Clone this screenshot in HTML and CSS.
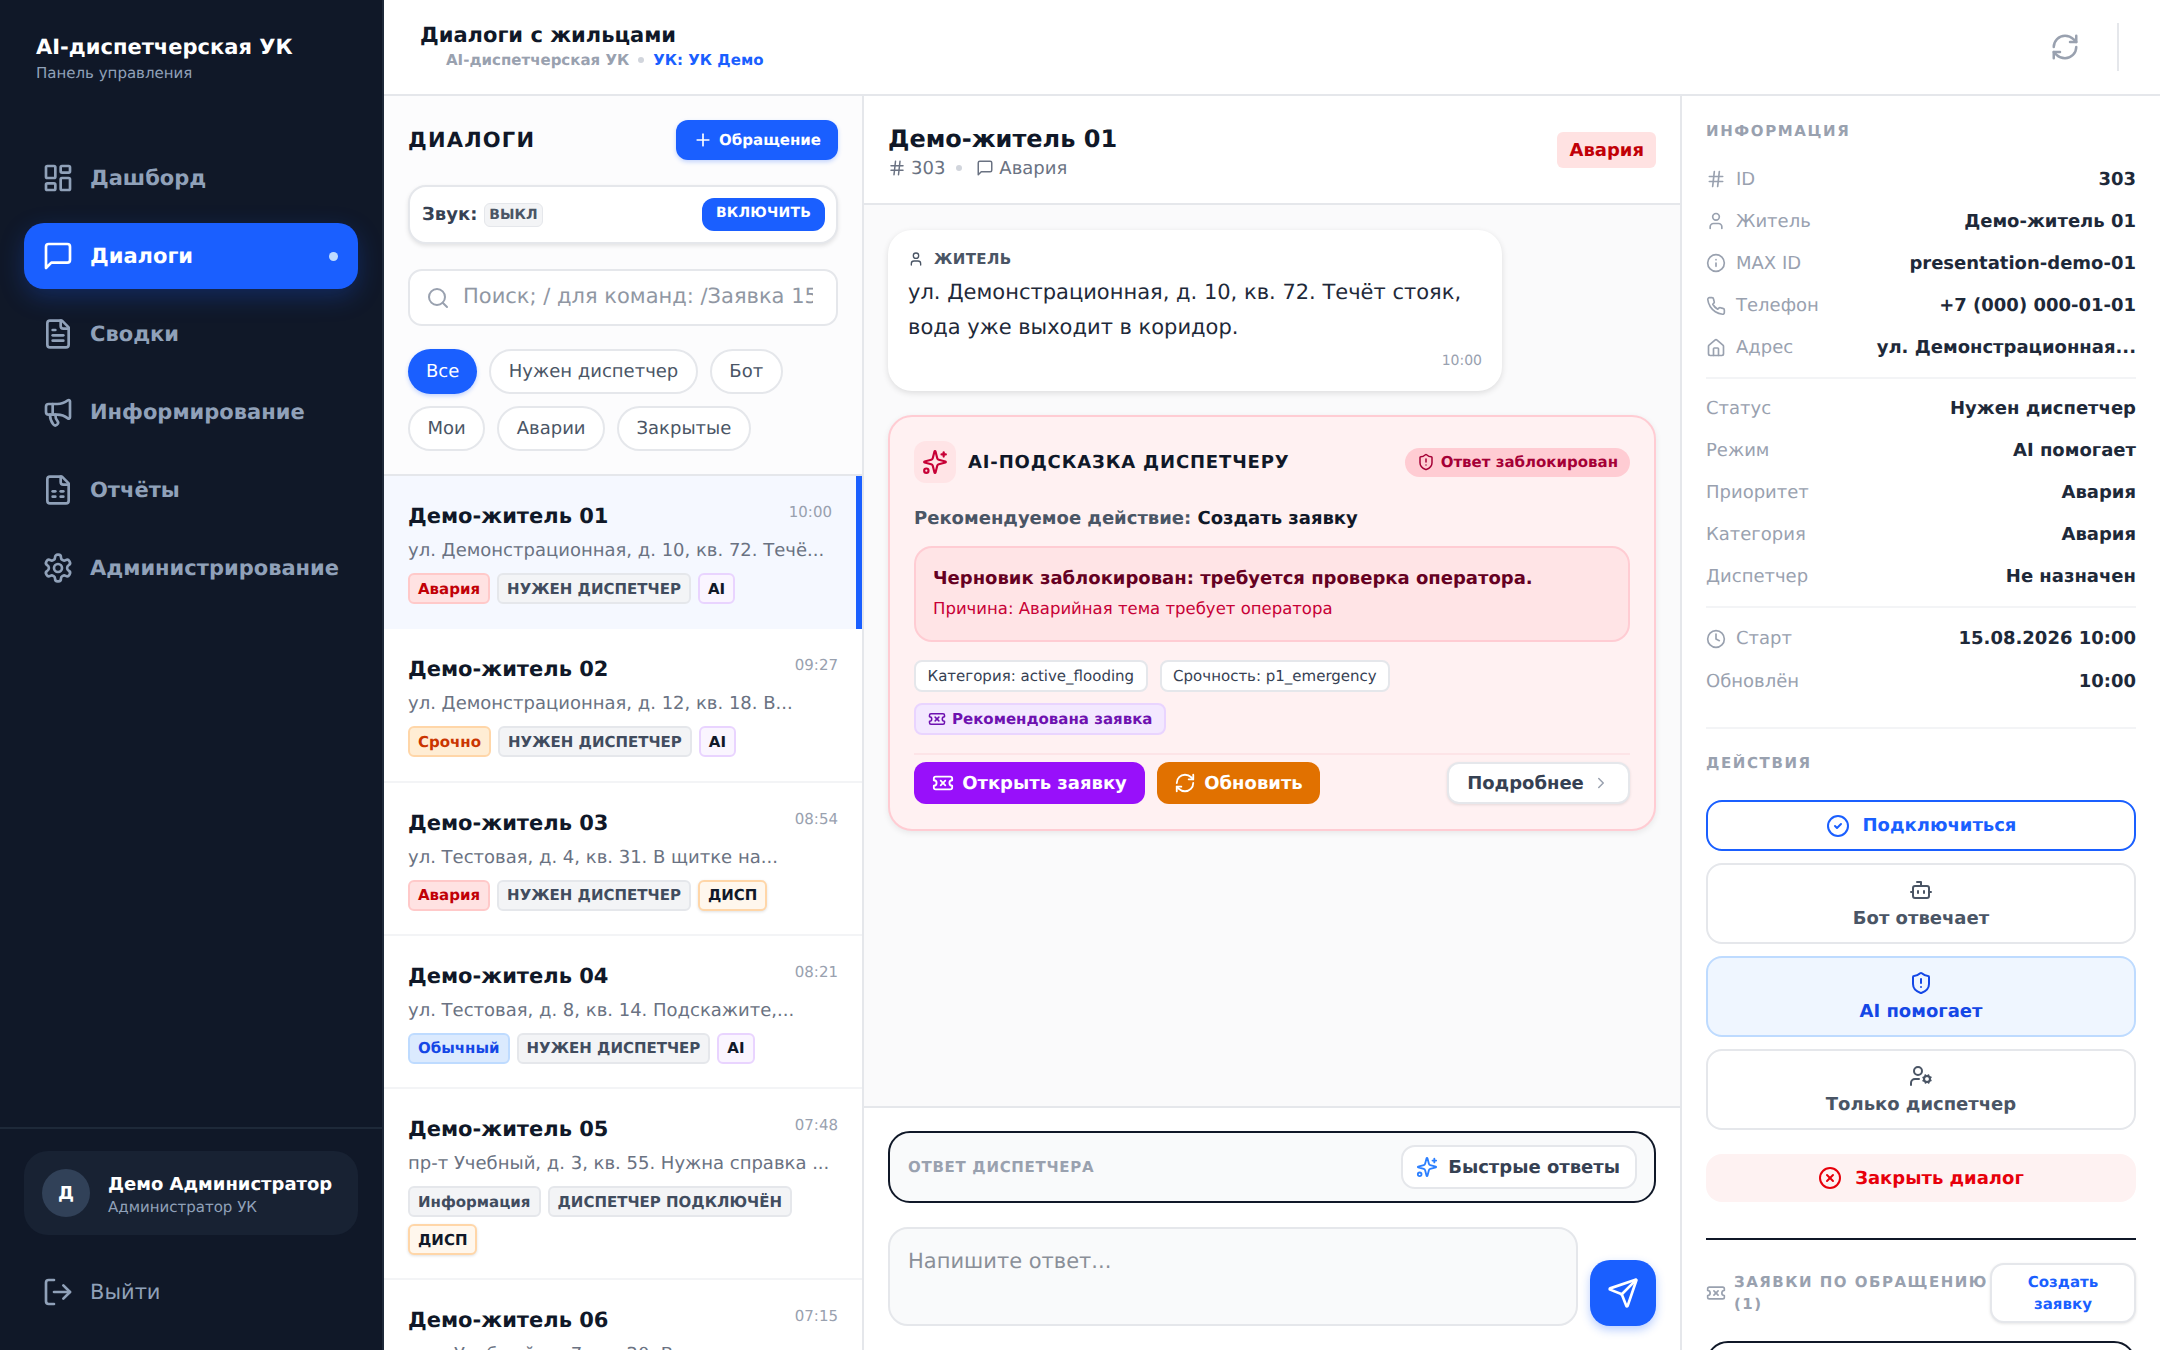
FILE: index.html
```html
<!DOCTYPE html>
<html lang="ru">
<head>
    <meta charset="UTF-8">
    <title>AI-диспетчерская УК</title>
    <link rel="stylesheet" href="styles.css">
</head>
<body>
    <!-- Набор иконок -->
    <svg class="sprite" width="0" height="0">
        <symbol id="i-dashboard" viewBox="0 0 24 24"><rect x="3" y="3" width="7" height="9" rx="1"/><rect x="14" y="3" width="7" height="5" rx="1"/><rect x="14" y="12" width="7" height="9" rx="1"/><rect x="3" y="16" width="7" height="5" rx="1"/></symbol>
        <symbol id="i-message" viewBox="0 0 24 24"><path d="M21 15a2 2 0 0 1-2 2H7l-4 4V5a2 2 0 0 1 2-2h14a2 2 0 0 1 2 2z"/></symbol>
        <symbol id="i-file" viewBox="0 0 24 24"><path d="M15 2H6a2 2 0 0 0-2 2v16a2 2 0 0 0 2 2h12a2 2 0 0 0 2-2V7z"/><path d="M14 2v4a2 2 0 0 0 2 2h4"/><path d="M10 9H8"/><path d="M16 13H8"/><path d="M16 17H8"/></symbol>
        <symbol id="i-sheet" viewBox="0 0 24 24"><path d="M15 2H6a2 2 0 0 0-2 2v16a2 2 0 0 0 2 2h12a2 2 0 0 0 2-2V7z"/><path d="M14 2v4a2 2 0 0 0 2 2h4"/><path d="M8 13h2"/><path d="M14 13h2"/><path d="M8 17h2"/><path d="M14 17h2"/></symbol>
        <symbol id="i-megaphone" viewBox="0 0 24 24"><path d="M11 6a13 13 0 0 0 8.4-2.8A1 1 0 0 1 21 4v12a1 1 0 0 1-1.6.8A13 13 0 0 0 11 14H5a2 2 0 0 1-2-2V8a2 2 0 0 1 2-2z"/><path d="M6 14a12 12 0 0 0 2.4 7.2 2 2 0 0 0 3.2-2.4A8 8 0 0 1 10 14"/><path d="M8 6v8"/></symbol>
        <symbol id="i-settings" viewBox="0 0 24 24"><path d="M12.22 2h-.44a2 2 0 0 0-2 2v.18a2 2 0 0 1-1 1.73l-.43.25a2 2 0 0 1-2 0l-.15-.08a2 2 0 0 0-2.73.73l-.22.38a2 2 0 0 0 .73 2.73l.15.1a2 2 0 0 1 1 1.72v.51a2 2 0 0 1-1 1.74l-.15.09a2 2 0 0 0-.73 2.73l.22.38a2 2 0 0 0 2.73.73l.15-.08a2 2 0 0 1 2 0l.43.25a2 2 0 0 1 1 1.73V20a2 2 0 0 0 2 2h.44a2 2 0 0 0 2-2v-.18a2 2 0 0 1 1-1.73l.43-.25a2 2 0 0 1 2 0l.15.08a2 2 0 0 0 2.73-.73l.22-.39a2 2 0 0 0-.73-2.73l-.15-.08a2 2 0 0 1-1-1.74v-.5a2 2 0 0 1 1-1.74l.15-.09a2 2 0 0 0 .73-2.73l-.22-.38a2 2 0 0 0-2.73-.73l-.15.08a2 2 0 0 1-2 0l-.43-.25a2 2 0 0 1-1-1.73V4a2 2 0 0 0-2-2z"/><circle cx="12" cy="12" r="3"/></symbol>
        <symbol id="i-logout" viewBox="0 0 24 24"><path d="M9 21H5a2 2 0 0 1-2-2V5a2 2 0 0 1 2-2h4"/><path d="m16 17 5-5-5-5"/><path d="M21 12H9"/></symbol>
        <symbol id="i-refresh" viewBox="0 0 24 24"><path d="M3 12a9 9 0 0 1 9-9 9.75 9.75 0 0 1 6.74 2.74L21 8"/><path d="M21 3v5h-5"/><path d="M21 12a9 9 0 0 1-9 9 9.75 9.75 0 0 1-6.74-2.74L3 16"/><path d="M8 16H3v5"/></symbol>
        <symbol id="i-plus" viewBox="0 0 24 24"><path d="M5 12h14"/><path d="M12 5v14"/></symbol>
        <symbol id="i-search" viewBox="0 0 24 24"><circle cx="11" cy="11" r="8"/><path d="m21 21-4.3-4.3"/></symbol>
        <symbol id="i-user" viewBox="0 0 24 24"><path d="M19 21v-2a4 4 0 0 0-4-4H9a4 4 0 0 0-4 4v2"/><circle cx="12" cy="7" r="4"/></symbol>
        <symbol id="i-hash" viewBox="0 0 24 24"><path d="M4 9h16"/><path d="M4 15h16"/><path d="M10 3 8 21"/><path d="M16 3l-2 18"/></symbol>
        <symbol id="i-sparkles" viewBox="0 0 24 24"><path d="M9.937 15.5A2 2 0 0 0 8.5 14.063l-6.135-1.582a.5.5 0 0 1 0-.962L8.5 9.936A2 2 0 0 0 9.937 8.5l1.582-6.135a.5.5 0 0 1 .963 0L14.063 8.5A2 2 0 0 0 15.5 9.937l6.135 1.581a.5.5 0 0 1 0 .964L15.5 14.063a2 2 0 0 0-1.437 1.437l-1.582 6.135a.5.5 0 0 1-.963 0z"/><path d="M20 3v4"/><path d="M22 5h-4"/><circle cx="4" cy="20" r="2"/></symbol>
        <symbol id="i-shield" viewBox="0 0 24 24"><path d="M20 13c0 5-3.5 7.5-7.66 8.95a1 1 0 0 1-.67-.01C7.5 20.5 4 18 4 13V6a1 1 0 0 1 1-1c2 0 4.5-1.2 6.24-2.72a1.17 1.17 0 0 1 1.52 0C14.51 3.81 17 5 19 5a1 1 0 0 1 1 1z"/><path d="M12 8v4"/><path d="M12 16h.01"/></symbol>
        <symbol id="i-ticket" viewBox="0 0 24 24"><path d="M2 9a3 3 0 0 1 0 6v2a2 2 0 0 0 2 2h16a2 2 0 0 0 2-2v-2a3 3 0 0 1 0-6V7a2 2 0 0 0-2-2H4a2 2 0 0 0-2 2Z"/><path d="m9.5 14.5 5-5"/><path d="m9.5 9.5 5 5"/></symbol>
        <symbol id="i-chevron" viewBox="0 0 24 24"><path d="m9 18 6-6-6-6"/></symbol>
        <symbol id="i-send" viewBox="0 0 24 24"><path d="M14.536 21.686a.5.5 0 0 0 .937-.024l6.5-19a.496.496 0 0 0-.635-.635l-19 6.5a.5.5 0 0 0-.024.937l7.93 3.18a2 2 0 0 1 1.112 1.11z"/><path d="m21.854 2.147-10.94 10.939"/></symbol>
        <symbol id="i-info" viewBox="0 0 24 24"><circle cx="12" cy="12" r="10"/><path d="M12 16v-4"/><path d="M12 8h.01"/></symbol>
        <symbol id="i-phone" viewBox="0 0 24 24"><path d="M22 16.92v3a2 2 0 0 1-2.18 2 19.79 19.79 0 0 1-8.63-3.07 19.5 19.5 0 0 1-6-6 19.79 19.79 0 0 1-3.07-8.67A2 2 0 0 1 4.11 2h3a2 2 0 0 1 2 1.72 12.84 12.84 0 0 0 .7 2.81 2 2 0 0 1-.45 2.11L8.09 9.91a16 16 0 0 0 6 6l1.27-1.27a2 2 0 0 1 2.11-.45 12.84 12.84 0 0 0 2.81.7A2 2 0 0 1 22 16.92z"/></symbol>
        <symbol id="i-home" viewBox="0 0 24 24"><path d="M15 21v-8a1 1 0 0 0-1-1h-4a1 1 0 0 0-1 1v8"/><path d="M3 10a2 2 0 0 1 .709-1.528l7-5.999a2 2 0 0 1 2.582 0l7 5.999A2 2 0 0 1 21 10v9a2 2 0 0 1-2 2H5a2 2 0 0 1-2-2z"/></symbol>
        <symbol id="i-clock" viewBox="0 0 24 24"><circle cx="12" cy="12" r="10"/><path d="M12 6v6l4 2"/></symbol>
        <symbol id="i-check" viewBox="0 0 24 24"><circle cx="12" cy="12" r="10"/><path d="m9 12 2 2 4-4"/></symbol>
        <symbol id="i-bot" viewBox="0 0 24 24"><path d="M12 8V4H8"/><rect x="4" y="8" width="16" height="12" rx="2"/><path d="M2 14h2"/><path d="M20 14h2"/><path d="M15 13v2"/><path d="M9 13v2"/></symbol>
        <symbol id="i-usercog" viewBox="0 0 24 24"><circle cx="18" cy="15" r="3"/><circle cx="9" cy="7" r="4"/><path d="M10 15H6a4 4 0 0 0-4 4v2"/><path d="m21.7 16.4-.9-.3"/><path d="m15.2 13.9-.9-.3"/><path d="m16.6 18.7.3-.9"/><path d="m19.1 12.2.3-.9"/><path d="m19.6 18.7-.4-1"/><path d="m16.8 12.3-.4-1"/><path d="m14.3 16.6 1-.4"/><path d="m20.7 13.8 1-.4"/></symbol>
        <symbol id="i-close" viewBox="0 0 24 24"><circle cx="12" cy="12" r="10"/><path d="m15 9-6 6"/><path d="m9 9 6 6"/></symbol>
    </svg>

    <!-- Боковое меню -->
    <aside class="sidebar">
        <div class="brand">
            <div class="brand-title">AI-диспетчерская УК</div>
            <div class="brand-sub">Панель управления</div>
        </div>
        <nav class="nav">
            <a class="nav-item"><svg class="ico ico-nav"><use href="#i-dashboard"/></svg>Дашборд</a>
            <a class="nav-item active"><svg class="ico ico-nav"><use href="#i-message"/></svg>Диалоги<span class="nav-dot"></span></a>
            <a class="nav-item"><svg class="ico ico-nav"><use href="#i-file"/></svg>Сводки</a>
            <a class="nav-item"><svg class="ico ico-nav"><use href="#i-megaphone"/></svg>Информирование</a>
            <a class="nav-item"><svg class="ico ico-nav"><use href="#i-sheet"/></svg>Отчёты</a>
            <a class="nav-item"><svg class="ico ico-nav"><use href="#i-settings"/></svg>Администрирование</a>
        </nav>
        <div class="side-foot">
            <div class="profile">
                <div class="avatar">Д</div>
                <div class="profile-info">
                    <div class="profile-name">Демо Администратор</div>
                    <div class="profile-role">Администратор УК</div>
                </div>
            </div>
            <a class="logout"><svg class="ico ico-nav"><use href="#i-logout"/></svg>Выйти</a>
        </div>
    </aside>

    <main class="main">
        <header class="topbar">
            <div>
                <div class="page-title">Диалоги с жильцами</div>
                <div class="crumbs">AI-диспетчерская УК<span class="dot"></span><span class="crumb-org">УК: УК Демо</span></div>
            </div>
            <div class="top-actions">
                <svg class="ico ico-refresh"><use href="#i-refresh"/></svg>
                <span class="top-sep"></span>
            </div>
        </header>

        <div class="workspace">
            <!-- Список диалогов -->
            <section class="list-col">
                <div class="list-head">
                    <div class="list-title-row">
                        <h2 class="list-title">ДИАЛОГИ</h2>
                        <button class="btn-new"><svg class="ico ico-20"><use href="#i-plus"/></svg>Обращение</button>
                    </div>
                    <div class="sound">
                        <span class="sound-label">Звук:</span>
                        <span class="sound-state">ВЫКЛ</span>
                        <button class="sound-btn">ВКЛЮЧИТЬ</button>
                    </div>
                    <label class="search">
                        <svg class="ico ico-search"><use href="#i-search"/></svg>
                        <input type="text" placeholder="Поиск; / для команд: /Заявка 15">
                    </label>
                    <div class="filters">
                        <span class="pill on">Все</span>
                        <span class="pill">Нужен диспетчер</span>
                        <span class="pill">Бот</span>
                        <span class="pill">Мои</span>
                        <span class="pill">Аварии</span>
                        <span class="pill">Закрытые</span>
                    </div>
                </div>
                <div class="dialogs">
                    <article class="dialog selected">
                        <div class="dialog-top"><span class="dialog-name">Демо-житель 01</span><span class="dialog-time">10:00</span></div>
                        <p class="dialog-text">ул. Демонстрационная, д. 10, кв. 72. Течё...</p>
                        <div class="tags"><span class="tag red">Авария</span><span class="tag gray">НУЖЕН ДИСПЕТЧЕР</span><span class="tag ai">AI</span></div>
                    </article>
                    <article class="dialog">
                        <div class="dialog-top"><span class="dialog-name">Демо-житель 02</span><span class="dialog-time">09:27</span></div>
                        <p class="dialog-text">ул. Демонстрационная, д. 12, кв. 18. В...</p>
                        <div class="tags"><span class="tag orange">Срочно</span><span class="tag gray">НУЖЕН ДИСПЕТЧЕР</span><span class="tag ai">AI</span></div>
                    </article>
                    <article class="dialog">
                        <div class="dialog-top"><span class="dialog-name">Демо-житель 03</span><span class="dialog-time">08:54</span></div>
                        <p class="dialog-text">ул. Тестовая, д. 4, кв. 31. В щитке на...</p>
                        <div class="tags"><span class="tag red">Авария</span><span class="tag gray">НУЖЕН ДИСПЕТЧЕР</span><span class="tag disp">ДИСП</span></div>
                    </article>
                    <article class="dialog">
                        <div class="dialog-top"><span class="dialog-name">Демо-житель 04</span><span class="dialog-time">08:21</span></div>
                        <p class="dialog-text">ул. Тестовая, д. 8, кв. 14. Подскажите,...</p>
                        <div class="tags"><span class="tag blue">Обычный</span><span class="tag gray">НУЖЕН ДИСПЕТЧЕР</span><span class="tag ai">AI</span></div>
                    </article>
                    <article class="dialog">
                        <div class="dialog-top"><span class="dialog-name">Демо-житель 05</span><span class="dialog-time">07:48</span></div>
                        <p class="dialog-text">пр-т Учебный, д. 3, кв. 55. Нужна справка ...</p>
                        <div class="tags"><span class="tag gray">Информация</span><span class="tag gray">ДИСПЕТЧЕР ПОДКЛЮЧЁН</span><span class="tag disp">ДИСП</span></div>
                    </article>
                    <article class="dialog">
                        <div class="dialog-top"><span class="dialog-name">Демо-житель 06</span><span class="dialog-time">07:15</span></div>
                        <p class="dialog-text">пр-т Учебный, д. 7, кв. 20. В подъезде уже...</p>
                    </article>
                </div>
            </section>

            <!-- Переписка -->
            <section class="chat-col">
                <div class="chat-head">
                    <div>
                        <div class="chat-name">Демо-житель 01</div>
                        <div class="chat-meta"><svg class="ico ico-18"><use href="#i-hash"/></svg>303<span class="dot"></span><svg class="ico ico-18"><use href="#i-message"/></svg>Авария</div>
                    </div>
                    <span class="chat-badge">Авария</span>
                </div>

                <div class="messages">
                    <div class="bubble">
                        <div class="bubble-who"><svg class="ico ico-16"><use href="#i-user"/></svg>ЖИТЕЛЬ</div>
                        <div class="bubble-text">ул. Демонстрационная, д. 10, кв. 72. Течёт стояк, вода уже выходит в коридор.</div>
                        <div class="bubble-time">10:00</div>
                    </div>

                    <div class="hint">
                        <div class="hint-head">
                            <span class="hint-tile"><svg class="ico ico-26"><use href="#i-sparkles"/></svg></span>
                            <span class="hint-title">AI-ПОДСКАЗКА ДИСПЕТЧЕРУ</span>
                            <span class="hint-state"><svg class="ico ico-18"><use href="#i-shield"/></svg>Ответ заблокирован</span>
                        </div>
                        <div class="hint-action">Рекомендуемое действие: <b>Создать заявку</b></div>
                        <div class="hint-block">
                            <div class="hint-block-title">Черновик заблокирован: требуется проверка оператора.</div>
                            <div class="hint-block-reason">Причина: Аварийная тема требует оператора</div>
                        </div>
                        <div class="hint-chips">
                            <span class="chip">Категория: active_flooding</span>
                            <span class="chip">Срочность: p1_emergency</span>
                            <span class="chip chip-ticket"><svg class="ico ico-18"><use href="#i-ticket"/></svg>Рекомендована заявка</span>
                        </div>
                        <div class="hint-buttons">
                            <button class="btn btn-violet"><svg class="ico ico-22"><use href="#i-ticket"/></svg>Открыть заявку</button>
                            <button class="btn btn-amber"><svg class="ico ico-22"><use href="#i-refresh"/></svg>Обновить</button>
                            <button class="btn btn-more">Подробнее<svg class="ico ico-18"><use href="#i-chevron"/></svg></button>
                        </div>
                    </div>
                </div>

                <div class="composer">
                    <div class="reply-bar">
                        <span class="reply-label">ОТВЕТ ДИСПЕТЧЕРА</span>
                        <button class="quick"><svg class="ico ico-22"><use href="#i-sparkles"/></svg>Быстрые ответы</button>
                    </div>
                    <div class="reply-row">
                        <textarea class="reply-input" placeholder="Напишите ответ..."></textarea>
                        <button class="send"><svg class="ico ico-32"><use href="#i-send"/></svg></button>
                    </div>
                </div>
            </section>

            <!-- Карточка обращения -->
            <section class="info-col">
                <h4 class="info-title">ИНФОРМАЦИЯ</h4>
                <div class="info-group group-contact">
                    <div class="row"><span class="row-key"><svg class="ico ico-20"><use href="#i-hash"/></svg>ID</span><b>303</b></div>
                    <div class="row"><span class="row-key"><svg class="ico ico-20"><use href="#i-user"/></svg>Житель</span><b>Демо-житель 01</b></div>
                    <div class="row"><span class="row-key"><svg class="ico ico-20"><use href="#i-info"/></svg>MAX ID</span><b>presentation-demo-01</b></div>
                    <div class="row"><span class="row-key"><svg class="ico ico-20"><use href="#i-phone"/></svg>Телефон</span><b>+7 (000) 000-01-01</b></div>
                    <div class="row"><span class="row-key"><svg class="ico ico-20"><use href="#i-home"/></svg>Адрес</span><b>ул. Демонстрационная...</b></div>
                </div>
                <div class="info-group group-state">
                    <div class="row"><span class="row-key">Статус</span><b>Нужен диспетчер</b></div>
                    <div class="row"><span class="row-key">Режим</span><b>AI помогает</b></div>
                    <div class="row"><span class="row-key">Приоритет</span><b>Авария</b></div>
                    <div class="row"><span class="row-key">Категория</span><b>Авария</b></div>
                    <div class="row"><span class="row-key">Диспетчер</span><b>Не назначен</b></div>
                </div>
                <div class="info-group group-time">
                    <div class="row"><span class="row-key"><svg class="ico ico-20"><use href="#i-clock"/></svg>Старт</span><b>15.08.2026 10:00</b></div>
                    <div class="row"><span class="row-key">Обновлён</span><b>10:00</b></div>
                </div>

                <h4 class="info-title actions-title">ДЕЙСТВИЯ</h4>
                <div class="actions">
                    <button class="act act-connect"><svg class="ico ico-24"><use href="#i-check"/></svg>Подключиться</button>
                    <button class="act act-mode"><svg class="ico ico-24"><use href="#i-bot"/></svg>Бот отвечает</button>
                    <button class="act act-mode act-on"><svg class="ico ico-24"><use href="#i-shield"/></svg>AI помогает</button>
                    <button class="act act-mode"><svg class="ico ico-24"><use href="#i-usercog"/></svg>Только диспетчер</button>
                    <button class="act act-close"><svg class="ico ico-24"><use href="#i-close"/></svg>Закрыть диалог</button>
                </div>

                <div class="tickets">
                    <div class="tickets-head">
                        <svg class="ico ico-20"><use href="#i-ticket"/></svg>
                        <span class="tickets-title">ЗАЯВКИ ПО ОБРАЩЕНИЮ (1)</span>
                        <button class="tickets-btn">Создать заявку</button>
                    </div>
                    <div class="ticket-card"></div>
                </div>
            </section>
        </div>
    </main>
</body>
</html>
```

FILE: styles.css
```css
* {
    box-sizing: border-box;
}

html, body {
    height: 100%;
}

body {
    margin: 0;
    display: flex;
    height: 1350px;
    overflow: hidden;
    font-family: "DejaVu Sans", sans-serif;
    text-rendering: geometricPrecision;
    color: #101828;
    background: #fff;
}

button, input, textarea {
    font-family: inherit;
    text-rendering: inherit;
}

button {
    cursor: pointer;
}

.sprite {
    position: absolute;
}

.ico {
    fill: none;
    stroke: currentColor;
    stroke-width: 2;
    stroke-linecap: round;
    stroke-linejoin: round;
    flex: none;
}

.ico-16 { width: 16px; height: 16px; }
.ico-18 { width: 18px; height: 18px; }
.ico-20 { width: 20px; height: 20px; }
.ico-22 { width: 22px; height: 22px; }
.ico-24 { width: 24px; height: 24px; }
.ico-26 { width: 26px; height: 26px; }
.ico-32 { width: 32px; height: 32px; }

/* Боковое меню */
.sidebar {
    width: 384px;
    flex: none;
    display: flex;
    flex-direction: column;
    background: #101828;
    border-right: 2px solid #1e2939;
}

.brand {
    padding: 34px 36px 0;
    height: 124px;
}

.brand-title {
    font-size: 21px;
    font-weight: 700;
    line-height: 26px;
    color: #fff;
}

.brand-sub {
    margin-top: 3px;
    font-size: 15px;
    line-height: 20px;
    color: #90a1b9;
}

.nav {
    display: flex;
    flex-direction: column;
    gap: 12px;
    padding: 21px 24px 0;
}

.nav-item {
    display: flex;
    align-items: center;
    gap: 16px;
    height: 66px;
    padding: 0 18px;
    border-radius: 20px;
    font-size: 21px;
    font-weight: 700;
    color: #90a1b9;
}

.ico-nav {
    width: 32px;
    height: 32px;
}

.nav-item.active {
    background: #1a5fff;
    color: #fff;
    box-shadow: 0 8px 24px rgba(26, 95, 255, 0.25);
}

.nav-dot {
    width: 9px;
    height: 9px;
    margin-left: auto;
    margin-right: 2px;
    border-radius: 50%;
    background: #bedbff;
}

.side-foot {
    margin-top: auto;
    padding: 22px 24px 0;
    height: 223px;
    border-top: 2px solid #1e2939;
}

.profile {
    display: flex;
    align-items: center;
    gap: 18px;
    height: 84px;
    padding: 0 18px;
    border-radius: 24px;
    background: #182233;
}

.profile-info {
    padding-top: 3px;
}

.avatar {
    width: 48px;
    height: 48px;
    flex: none;
    display: flex;
    align-items: center;
    justify-content: center;
    border-radius: 50%;
    background: #314158;
    font-size: 18px;
    font-weight: 700;
    color: #fff;
}

.profile-name {
    font-size: 18px;
    font-weight: 700;
    line-height: 24px;
    color: #fff;
}

.profile-role {
    font-size: 15px;
    line-height: 20px;
    color: #90a1b9;
}

.logout {
    display: flex;
    align-items: center;
    gap: 16px;
    margin-top: 41px;
    padding: 0 18px;
    font-size: 21px;
    color: #90a1b9;
}

/* Верхняя панель */
.main {
    flex: 1;
    min-width: 0;
    display: flex;
    flex-direction: column;
}

.topbar {
    height: 96px;
    flex: none;
    display: flex;
    align-items: center;
    justify-content: space-between;
    padding: 0 41px 0 36px;
    border-bottom: 2px solid #e5e7eb;
}

.page-title {
    font-size: 21px;
    font-weight: 700;
    line-height: 29px;
}

.crumbs {
    display: flex;
    align-items: center;
    margin-top: -3px;
    padding-left: 26px;
    font-size: 15px;
    font-weight: 700;
    line-height: 26px;
    color: #99a1af;
}

.crumb-org {
    color: #1a5fff;
}

.dot {
    width: 6px;
    height: 6px;
    margin: 0 9px;
    border-radius: 50%;
    background: #d1d5dc;
}

.top-actions {
    display: flex;
    align-items: center;
    gap: 37px;
}

.ico-refresh {
    width: 30px;
    height: 30px;
    color: #99a1af;
}

.top-sep {
    width: 2px;
    height: 48px;
    background: #e5e7eb;
}

.workspace {
    flex: 1;
    min-height: 0;
    display: grid;
    grid-template-columns: 480px 816px 480px;
}

/* Список диалогов */
.list-col {
    display: flex;
    flex-direction: column;
    min-height: 0;
    overflow: hidden;
    background: #fff;
    border-right: 2px solid #e5e7eb;
}

.list-head {
    flex: none;
    height: 380px;
    padding: 24px 24px 0;
    background: #fcfcfd;
    border-bottom: 2px solid #e5e7eb;
}

.list-title-row {
    display: flex;
    align-items: center;
    justify-content: space-between;
    height: 40px;
}

.list-title {
    margin: 0;
    font-size: 21px;
    font-weight: 700;
    letter-spacing: 1.2px;
}

.btn-new {
    display: flex;
    align-items: center;
    justify-content: center;
    gap: 6px;
    width: 162px;
    height: 40px;
    padding: 0;
    border: none;
    border-radius: 12px;
    background: #1a5fff;
    color: #fff;
    font-size: 15px;
    font-weight: 700;
    box-shadow: 0 2px 4px rgba(26, 95, 255, 0.25);
}

.sound {
    display: flex;
    align-items: center;
    height: 59px;
    margin-top: 25px;
    padding: 0 11px 0 12px;
    background: #fff;
    border: 2px solid #e5e7eb;
    border-radius: 18px;
    box-shadow: 0 2px 4px rgba(0, 0, 0, 0.1);
}

.sound-label {
    font-size: 18px;
    font-weight: 700;
    color: #364153;
}

.sound-state {
    margin-left: 7px;
    padding: 3px 4px;
    border: 1px solid #e5e7eb;
    border-radius: 6px;
    background: #f3f4f6;
    font-size: 14px;
    font-weight: 700;
    color: #4a5565;
}

.sound-btn {
    margin-left: auto;
    width: 123px;
    height: 33px;
    padding: 0 0 4px;
    border: none;
    border-radius: 12px;
    background: #1a5fff;
    color: #fff;
    font-size: 14px;
    font-weight: 700;
    letter-spacing: 0.2px;
}

.search {
    display: flex;
    align-items: center;
    gap: 13px;
    height: 57px;
    margin-top: 25px;
    padding: 0 23px 0 16px;
    background: #fff;
    border: 2px solid #e5e7eb;
    border-radius: 14px;
    color: #99a1af;
}

.ico-search {
    width: 24px;
    height: 24px;
}

.search input {
    flex: 1;
    min-width: 0;
    padding: 0 0 3px;
    border: none;
    outline: none;
    background: transparent;
    font-size: 21px;
}

.search input::placeholder {
    color: #9097a3;
}

.filters {
    display: flex;
    flex-wrap: wrap;
    gap: 12px;
    margin-top: 23px;
}

.pill {
    height: 45px;
    padding: 0 17.5px;
    display: flex;
    align-items: center;
    background: #fff;
    border: 2px solid #e5e7eb;
    border-radius: 23px;
    font-size: 18px;
    color: #4a5565;
}

.pill.on {
    padding: 0 18px;
    background: #1a5fff;
    border: none;
    color: #fff;
    box-shadow: 0 2px 4px rgba(26, 95, 255, 0.25);
}

.dialogs {
    flex: 1;
    min-height: 0;
    overflow: hidden;
}

.dialog {
    height: 153.33px;
    padding: 26px 24px 0;
    border-bottom: 2px solid #f3f4f6;
}

.dialog:nth-child(5) {
    height: 191px;
}

.dialog.selected {
    background: #f5f8ff;
    border-bottom: none;
    border-right: 6px solid #1a5fff;
}

.dialog-top {
    display: flex;
    justify-content: space-between;
    align-items: flex-start;
}

.dialog-name {
    font-size: 21px;
    font-weight: 700;
    line-height: 28px;
}

.dialog-time {
    font-size: 15px;
    line-height: 20px;
    color: #99a1af;
}

.dialog-text {
    margin: 8px 0 0;
    font-size: 18px;
    line-height: 26px;
    color: #6a7282;
    white-space: nowrap;
}

.tags {
    display: flex;
    flex-wrap: wrap;
    gap: 7px;
    margin-top: 9px;
}

.tag {
    height: 31px;
    padding: 0 8px;
    display: flex;
    align-items: center;
    border: 2px solid #e5e7eb;
    border-radius: 6px;
    font-size: 15px;
    font-weight: 700;
    background: #f3f4f6;
    color: #414c5e;
}

.tag.red { background: #ffe2e2; border-color: #ffc9c9; color: #c10007; }
.tag.orange { background: #ffedd4; border-color: #ffd6a8; color: #ca3500; }
.tag.blue { background: #dbeafe; border-color: #bedbff; color: #1447e6; }
.tag.ai { background: #faf5ff; border-color: #e9d4ff; color: #101828; }
.tag.disp { background: #fff7ed; border-color: #ffd6a8; color: #101828; box-shadow: 0 1px 3px rgba(0, 0, 0, 0.12); }

/* Переписка */
.chat-col {
    display: flex;
    flex-direction: column;
    min-height: 0;
}

.chat-head {
    flex: none;
    height: 109px;
    display: flex;
    align-items: center;
    justify-content: space-between;
    padding: 2px 24px 0;
    border-bottom: 2px solid #e5e7eb;
}

.chat-name {
    font-size: 24px;
    font-weight: 700;
    line-height: 32px;
}

.chat-meta {
    display: flex;
    align-items: center;
    gap: 5px;
    margin-top: 3px;
    font-size: 18px;
    color: #6a7282;
}

.chat-meta .dot {
    margin: 0 9px 0 6px;
}

.chat-badge {
    height: 36px;
    margin-top: -1px;
    padding: 0 12px;
    display: flex;
    align-items: center;
    border-radius: 6px;
    background: #ffe2e2;
    color: #c10007;
    font-size: 18px;
    font-weight: 700;
}

.messages {
    flex: 1;
    min-height: 0;
    padding: 25px 24px 0;
    background: #fafafb;
}

.bubble {
    width: 614px;
    height: 161px;
    padding: 20px 20px 0;
    background: #fff;
    border-radius: 24px;
    box-shadow: 0 2px 6px rgba(0, 0, 0, 0.12);
}

.bubble-who {
    display: flex;
    align-items: center;
    gap: 10px;
    font-size: 15px;
    font-weight: 700;
    letter-spacing: 0.4px;
    color: #4a5565;
}

.bubble-text {
    margin-top: 7px;
    font-size: 21px;
    line-height: 35px;
    color: #1e2939;
}

.bubble-time {
    margin-top: 8px;
    font-size: 14px;
    text-align: right;
    color: #99a1af;
}

.hint {
    height: 416px;
    margin-top: 24px;
    padding: 24px 24px 0;
    background: #fff1f2;
    border: 2px solid #ffccd3;
    border-radius: 24px;
    box-shadow: 0 2px 6px rgba(0, 0, 0, 0.08);
}

.hint-head {
    display: flex;
    align-items: center;
    height: 42px;
}

.hint-tile {
    width: 42px;
    height: 42px;
    display: flex;
    align-items: center;
    justify-content: center;
    border-radius: 12px;
    background: #ffe4e6;
    color: #c70036;
}

.hint-title {
    margin-left: 12px;
    font-size: 18px;
    font-weight: 700;
    letter-spacing: 0.85px;
}

.hint-state {
    margin-left: auto;
    display: flex;
    align-items: center;
    gap: 6px;
    height: 29px;
    padding: 0 12px;
    border-radius: 15px;
    background: #ffccd3;
    color: #a50036;
    font-size: 15px;
    font-weight: 700;
}

.hint-action {
    margin-top: 24px;
    font-size: 18px;
    font-weight: 700;
    line-height: 24px;
    color: #4a5565;
}

.hint-action b {
    color: #101828;
}

.hint-block {
    height: 96px;
    margin-top: 15px;
    padding: 18px 17px 0;
    background: #ffe4e6;
    border: 2px solid #ffccd3;
    border-radius: 18px;
}

.hint-block-title {
    font-size: 18px;
    font-weight: 700;
    line-height: 26px;
    color: #650022;
}

.hint-block-reason {
    margin-top: 4px;
    font-size: 16.5px;
    line-height: 26px;
    color: #c70036;
}

.hint-chips {
    display: flex;
    flex-wrap: wrap;
    gap: 11px 12px;
    margin-top: 18px;
}

.chip {
    height: 32px;
    padding: 0 11.5px;
    display: flex;
    align-items: center;
    background: #fff;
    border: 2px solid #e5e7eb;
    border-radius: 8px;
    font-size: 15px;
    color: #364153;
}

.chip-ticket {
    gap: 6px;
    padding: 0 12px;
    background: #f3e8ff;
    border-color: #e9d4ff;
    color: #6e11b0;
    font-weight: 700;
}

.hint-buttons {
    display: flex;
    align-items: center;
    gap: 12px;
    margin-top: 18px;
    padding-top: 7px;
    border-top: 2px solid #fde4e7;
}

.btn {
    display: flex;
    align-items: center;
    justify-content: center;
    gap: 8px;
    height: 42px;
    padding: 0;
    border: none;
    border-radius: 12px;
    font-size: 18px;
    font-weight: 700;
    color: #fff;
}

.btn-violet {
    width: 231px;
    background: #9810fa;
}

.btn-amber {
    width: 163px;
    background: #e17100;
}

.btn-more {
    width: 183px;
    margin-left: auto;
    background: #fff;
    border: 2px solid #e5e7eb;
    color: #364153;
    box-shadow: 0 1px 3px rgba(0, 0, 0, 0.1);
}

.btn-more .ico {
    color: #99a1af;
}

.composer {
    flex: none;
    height: 244px;
    padding: 23px 24px 0;
    background: #fff;
    border-top: 2px solid #e5e7eb;
}

.reply-bar {
    display: flex;
    align-items: center;
    justify-content: space-between;
    height: 72px;
    padding: 0 17px 0 18px;
    background: #f9fafb;
    border: 2px solid #101828;
    border-radius: 22px;
}

.reply-label {
    font-size: 15px;
    font-weight: 700;
    letter-spacing: 0.7px;
    color: #99a1af;
}

.quick {
    display: flex;
    align-items: center;
    gap: 10px;
    height: 44px;
    padding: 0 15px 0 13px;
    background: #fff;
    border: 2px solid #e5e7eb;
    border-radius: 14px;
    font-size: 18px;
    font-weight: 700;
    color: #364153;
}

.quick .ico {
    color: #2b7fff;
}

.reply-row {
    display: flex;
    align-items: flex-end;
    gap: 12px;
    margin-top: 24px;
}

.reply-input {
    flex: 1;
    height: 99px;
    padding: 20px 18px;
    resize: none;
    outline: none;
    background: #f9fafb;
    border: 2px solid #e5e7eb;
    border-radius: 20px;
    font-size: 21px;
}

.reply-input::placeholder {
    color: #8a8f98;
}

.send {
    width: 66px;
    height: 66px;
    padding: 0;
    display: flex;
    align-items: center;
    justify-content: center;
    border: none;
    border-radius: 20px;
    background: #1a5fff;
    color: #fff;
    box-shadow: 0 4px 10px rgba(26, 95, 255, 0.3);
}

/* Карточка обращения */
.info-col {
    min-height: 0;
    overflow: hidden;
    padding: 25px 24px 0;
    background: #fff;
    border-left: 2px solid #e5e7eb;
}

.info-title {
    margin: 0;
    font-size: 15px;
    font-weight: 700;
    line-height: 20px;
    letter-spacing: 1.6px;
    color: #99a1af;
}

.info-group {
    border-bottom: 2px solid #f3f4f6;
}

.group-contact {
    margin-top: 6px;
    padding: 11px 0 8px;
}

.group-state {
    padding: 8px 0 8px;
}

.group-time {
    padding: 10px 0 25px;
}

.row {
    display: flex;
    align-items: center;
    justify-content: space-between;
    height: 42.2px;
    font-size: 18px;
}

.row-key {
    display: flex;
    align-items: center;
    gap: 10px;
    color: #99a1af;
}

.row b {
    color: #1e2939;
}

.actions-title {
    margin-top: 24px;
}

.actions {
    display: flex;
    flex-direction: column;
    gap: 12px;
    margin-top: 27px;
}

.act {
    width: 100%;
    padding: 0;
    display: flex;
    align-items: center;
    justify-content: center;
    background: #fff;
    border: 2px solid #e5e7eb;
    border-radius: 16px;
    font-size: 18px;
    font-weight: 700;
    color: #4a5565;
}

.act-connect {
    height: 51px;
    gap: 13px;
    border-color: #1a5fff;
    color: #1a5fff;
}

.act-mode {
    height: 81px;
    flex-direction: column;
    gap: 6px;
}

.act-on {
    background: #eff6ff;
    border-color: #bedbff;
    color: #1447e6;
}

.act-close {
    height: 48px;
    margin-top: 12px;
    gap: 13px;
    background: #fef2f2;
    border: none;
    color: #e7000b;
}

.tickets {
    margin-top: 36px;
    padding-top: 23px;
    border-top: 2px solid #101828;
}

.tickets-head {
    display: flex;
    align-items: center;
    gap: 8px;
    color: #99a1af;
}

.tickets-title {
    flex: 1;
    min-width: 0;
    font-size: 15px;
    font-weight: 700;
    line-height: 22px;
    letter-spacing: 1.5px;
}

.tickets-btn {
    flex: none;
    width: 146px;
    height: 60px;
    margin-left: -14px;
    padding: 0 10px;
    background: #fff;
    border: 2px solid #e5e7eb;
    border-radius: 14px;
    font-size: 15px;
    font-weight: 700;
    line-height: 22px;
    color: #1a5fff;
    box-shadow: 0 1px 3px rgba(0, 0, 0, 0.1);
}

.ticket-card {
    height: 120px;
    margin-top: 18px;
    border: 2px solid #101828;
    border-radius: 22px;
}
```
